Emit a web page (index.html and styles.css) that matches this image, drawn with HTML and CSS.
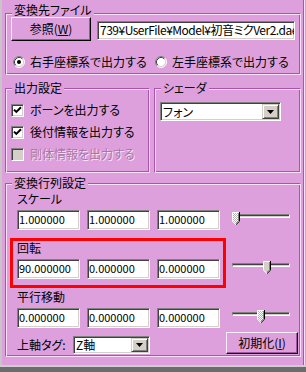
FILE: index.html
```html
<!DOCTYPE html>
<html lang="ja">
<head>
<meta charset="utf-8">
<title>変換設定</title>
<link rel="stylesheet" href="styles.css">
</head>
<body>
<div class="window">
  <div class="panel">
    <fieldset class="group g-file">
      <legend class="legend-low">変換先ファイル</legend>
      <div class="body file-body">
        <div class="file-row">
          <button class="btn btn-ref">参照(<u>W</u>)</button>
          <div class="edit edit-path">739¥UserFile¥Model¥初音ミクVer2.dae</div>
        </div>
        <div class="radio-row">
          <div class="radio">
            <svg class="radio-icon" width="12" height="12" viewBox="0 0 12 12">
              <circle cx="6" cy="6" r="5" fill="#fff"/>
              <path d="M9.89 2.11A5.5 5.5 0 0 0 2.11 9.89" fill="none" stroke="#808080"/>
              <path d="M2.11 9.89A5.5 5.5 0 0 0 9.89 2.11" fill="none" stroke="#fff"/>
              <path d="M9.18 2.82A4.5 4.5 0 0 0 2.82 9.18" fill="none" stroke="#404040"/>
              <path d="M2.82 9.18A4.5 4.5 0 0 0 9.18 2.82" fill="none" stroke="#d4d0c8"/>
              <circle cx="6" cy="6" r="2" fill="#000"/>
            </svg>
            <span>右手座標系で出力する</span>
          </div>
          <div class="radio">
            <svg class="radio-icon" width="12" height="12" viewBox="0 0 12 12">
              <circle cx="6" cy="6" r="5" fill="#fff"/>
              <path d="M9.89 2.11A5.5 5.5 0 0 0 2.11 9.89" fill="none" stroke="#808080"/>
              <path d="M2.11 9.89A5.5 5.5 0 0 0 9.89 2.11" fill="none" stroke="#fff"/>
              <path d="M9.18 2.82A4.5 4.5 0 0 0 2.82 9.18" fill="none" stroke="#404040"/>
              <path d="M2.82 9.18A4.5 4.5 0 0 0 9.18 2.82" fill="none" stroke="#d4d0c8"/>
            </svg>
            <span>左手座標系で出力する</span>
          </div>
        </div>
      </div>
    </fieldset>

    <div class="split">
      <fieldset class="group g-out">
        <legend>出力設定</legend>
        <div class="body out-body">
          <div class="check">
            <span class="box"><svg width="9" height="9" viewBox="0 0 9 9"><path d="M1 3.6L3.3 5.9L8 1.2" fill="none" stroke="#000" stroke-width="2"/></svg></span>
            <span>ボーンを出力する</span>
          </div>
          <div class="check">
            <span class="box"><svg width="9" height="9" viewBox="0 0 9 9"><path d="M1 3.6L3.3 5.9L8 1.2" fill="none" stroke="#000" stroke-width="2"/></svg></span>
            <span>後付情報を出力する</span>
          </div>
          <div class="check disabled">
            <span class="box"></span>
            <span>剛体情報を出力する</span>
          </div>
        </div>
      </fieldset>
      <fieldset class="group g-shader">
        <legend>シェーダ</legend>
        <div class="body shader-body">
          <div class="combo combo-shader">
            <span class="combo-text">フォン</span>
            <span class="combo-btn"><svg width="7" height="4" viewBox="0 0 7 4"><path d="M0 0H7L3.5 4Z" fill="#000"/></svg></span>
          </div>
        </div>
      </fieldset>
    </div>

    <fieldset class="group g-matrix">
      <legend>変換行列設定</legend>
      <div class="body matrix-body">
        <div class="section">
          <div class="sec-label">スケール</div>
          <div class="vec-row">
            <div class="edit num">1.000000</div>
            <div class="edit num">1.000000</div>
            <div class="edit num">1.000000</div>
            <div class="slider">
              <div class="track"></div>
              <svg class="thumb" style="left:0px" width="8" height="13" viewBox="0 0 8 13">
                <defs>
                  <pattern id="dith" width="2" height="2" patternUnits="userSpaceOnUse">
                    <rect width="2" height="2" fill="#ffffff"/>
                    <rect width="1" height="1" fill="#b8b4b0"/>
                    <rect x="1" y="1" width="1" height="1" fill="#b8b4b0"/>
                  </pattern>
                </defs>
                <path d="M0 0H8V9L4 13L0 9Z" fill="url(#dith)"/>
                <path d="M0.5 9.2V0.5H7" fill="none" stroke="#fff"/>
                <path d="M0.5 9.2L4 12.6" fill="none" stroke="#fff"/>
                <path d="M7.5 0V9.2L4 12.6" fill="none" stroke="#000"/>
                <path d="M6.5 1V8.8L4 11.3" fill="none" stroke="#808080"/>
              </svg>
            </div>
          </div>
        </div>

        <div class="section sec-rot">
          <div class="sec-label">回転</div>
          <div class="vec-row">
            <div class="edit num">90.000000</div>
            <div class="edit num">0.000000</div>
            <div class="edit num">0.000000</div>
            <div class="slider">
              <div class="track"></div>
              <svg class="thumb" style="left:31px" width="8" height="13" viewBox="0 0 8 13">
                <path d="M0 0H8V9L4 13L0 9Z" fill="#d4d0c8"/>
                <path d="M0.5 9.2V0.5H7" fill="none" stroke="#fff"/>
                <path d="M0.5 9.2L4 12.6" fill="none" stroke="#fff"/>
                <path d="M7.5 0V9.2L4 12.6" fill="none" stroke="#000"/>
                <path d="M6.5 1V8.8L4 11.3" fill="none" stroke="#808080"/>
              </svg>
            </div>
          </div>
          <div class="highlight"></div>
        </div>

        <div class="section">
          <div class="sec-label">平行移動</div>
          <div class="vec-row">
            <div class="edit num">0.000000</div>
            <div class="edit num">0.000000</div>
            <div class="edit num">0.000000</div>
            <div class="slider">
              <div class="track"></div>
              <svg class="thumb" style="left:25px" width="8" height="13" viewBox="0 0 8 13">
                <path d="M0 0H8V9L4 13L0 9Z" fill="url(#dith)"/>
                <path d="M0.5 9.2V0.5H7" fill="none" stroke="#fff"/>
                <path d="M0.5 9.2L4 12.6" fill="none" stroke="#fff"/>
                <path d="M7.5 0V9.2L4 12.6" fill="none" stroke="#000"/>
                <path d="M6.5 1V8.8L4 11.3" fill="none" stroke="#808080"/>
              </svg>
            </div>
          </div>
        </div>

        <div class="bottom-row">
          <span class="axis-label">上軸タグ:</span>
          <div class="combo combo-axis">
            <span class="combo-text">Z軸</span>
            <span class="combo-btn"><svg width="7" height="4" viewBox="0 0 7 4"><path d="M0 0H7L3.5 4Z" fill="#000"/></svg></span>
          </div>
          <button class="btn btn-init">初期化(<u>I</u>)</button>
        </div>
      </div>
    </fieldset>
  </div>
  <div class="frame-bottom"></div>
</div>
</body>
</html>
```

FILE: styles.css
```css
* {
  box-sizing: border-box;
}

html,
body {
  margin: 0;
  padding: 0;
}

body {
  background: #dda0dd;
  font-family: "Noto Sans CJK JP", "Noto Sans", sans-serif;
  font-size: 12px;
  color: #000;
  font-feature-settings: "palt";
}

.window {
  width: 306px;
  height: 372px;
  display: flex;
  flex-direction: column;
  background: #dda0dd;
  overflow: hidden;
}

.panel {
  height: 365px;
  flex: none;
  margin-right: 1px;
  border-left: 2px solid #c8c4c8;
  border-right: 1px solid #f8e0f8;
  box-shadow: inset -1px 0 0 #b050b0;
  padding: 3px 3px 0 3px;
  display: flex;
  flex-direction: column;
}

.frame-bottom {
  flex: 1;
  border-top: 2px solid #d0ccd0;
  background: #6c6c6c;
}

/* group boxes */
.group {
  margin: 0;
  padding: 0;
  min-width: 0;
  border: 1px solid;
  border-color: #b050b0 #f8e0f8 #f8e0f8 #b050b0;
  box-shadow: inset 1px 1px 0 #f8e0f8, inset -1px -1px 0 #b050b0;
}

.group legend {
  margin-left: 6px;
  padding: 0 2px;
  line-height: 14px;
  background: #dda0dd;
}

/* the first group's frame line sits lower than its title */
.g-file {
  height: 69px;
  flex: none;
  margin-top: 3px;
}

.group legend.legend-low {
  position: relative;
  top: -3px;
}

.file-body {
  padding: 0 5px;
}

.file-row {
  display: flex;
  align-items: flex-start;
  margin-top: -3px;
}

.btn {
  margin: 0;
  padding: 0;
  font: inherit;
  color: #000;
  background: #dda0dd;
  border: 1px solid;
  border-color: #fbeefb #000 #000 #fbeefb;
  box-shadow: inset -1px -1px 0 #a850a8;
  display: flex;
  align-items: center;
  justify-content: center;
  line-height: 14px;
}

.btn u {
  text-decoration: underline;
}

.btn-ref {
  width: 80px;
  height: 24px;
}

.edit {
  background: #fff;
  border: 1px solid;
  border-color: #808080 #fff #fff #808080;
  box-shadow: inset 1px 1px 0 #404040, inset -1px -1px 0 #d4d0c8;
  white-space: nowrap;
  overflow: hidden;
}

.edit-path {
  width: 198px;
  height: 19px;
  margin-left: 6px;
  margin-top: 4px;
  padding-left: 2px;
  line-height: 16px;
  letter-spacing: -0.5px;
}

.radio-row {
  display: flex;
  align-items: center;
  height: 14px;
  margin-top: 14px;
  padding-left: 2px;
}

.radio {
  display: flex;
  align-items: center;
  gap: 5px;
  width: 142px;
  flex: none;
  line-height: 14px;
}

.radio-icon {
  flex: none;
  display: block;
}

/* second line of groups */
.split {
  display: flex;
  gap: 4px;
  margin-top: 6px;
  height: 92px;
  flex: none;
}

.g-out {
  width: 145px;
  flex: none;
}

.g-shader {
  width: 147px;
  flex: none;
}

.out-body {
  padding: 4px 0 0 5px;
}

.check {
  display: flex;
  align-items: center;
  gap: 6px;
  height: 22px;
  line-height: 14px;
}

.box {
  width: 13px;
  height: 13px;
  flex: none;
  display: flex;
  align-items: center;
  justify-content: center;
  background: #fff;
  border: 1px solid;
  border-color: #808080 #fff #fff #808080;
  box-shadow: inset 1px 1px 0 #404040, inset -1px -1px 0 #d4d0c8;
}

.box svg {
  display: block;
}

.check.disabled {
  color: #a678a6;
  text-shadow: 1px 1px 0 #f8e4f8;
}

.check.disabled .box {
  background: #d4d0c8;
}

.shader-body {
  padding: 7px 0 0 5px;
}

.combo {
  display: flex;
  align-items: stretch;
  background: #fff;
  border: 1px solid;
  border-color: #808080 #fff #fff #808080;
  box-shadow: inset 1px 1px 0 #404040, inset -1px -1px 0 #d4d0c8;
  padding: 1px;
}

.combo-text {
  flex: 1;
  padding-left: 1px;
  display: flex;
  align-items: center;
  line-height: 14px;
}

.combo-btn {
  width: 17px;
  flex: none;
  background: #d4d0c8;
  border: 1px solid;
  border-color: #d4d0c8 #404040 #404040 #d4d0c8;
  box-shadow: inset 1px 1px 0 #fff, inset -1px -1px 0 #808080;
  display: flex;
  align-items: center;
  justify-content: center;
}

.combo-btn svg {
  display: block;
}

.combo-shader {
  width: 121px;
  height: 19px;
}

/* matrix group */
.g-matrix {
  height: 181px;
  flex: none;
  margin-top: 3px;
}

.matrix-body {
  padding: 2px 0 0 11px;
}

.section {
  position: relative;
}

.section + .section {
  margin-top: 11px;
}

.sec-label {
  line-height: 14px;
  height: 14px;
}

.vec-row {
  display: flex;
  gap: 7px;
  margin-top: 4px;
  height: 20px;
}

.num {
  width: 63px;
  height: 20px;
  padding-left: 1px;
  font-size: 11px;
  line-height: 17px;
  font-feature-settings: normal;
}

.slider {
  position: relative;
  width: 58px;
  margin-left: 5px;
  height: 20px;
}

.track {
  margin-top: 4px;
  height: 4px;
  border-top: 1px solid #808080;
  border-left: 1px solid #808080;
  border-bottom: 1px solid #fff;
  border-right: 1px solid #fff;
  background: #404040;
  box-shadow: inset 0 -1px 0 #d4d0c8;
}

.thumb {
  position: absolute;
  top: 2px;
  display: block;
}

.highlight {
  position: absolute;
  left: -7px;
  top: -3px;
  width: 216px;
  height: 50px;
  border: 3px solid #ff0000;
  pointer-events: none;
}

.bottom-row {
  display: flex;
  align-items: flex-end;
  height: 22px;
  margin-top: 4px;
}

.axis-label {
  width: 56px;
  flex: none;
  line-height: 14px;
  margin-bottom: 2px;
}

.combo-axis {
  width: 77px;
  height: 18px;
}

.btn-init {
  width: 72px;
  height: 22px;
  margin-left: auto;
  margin-right: 2px;
}
```
